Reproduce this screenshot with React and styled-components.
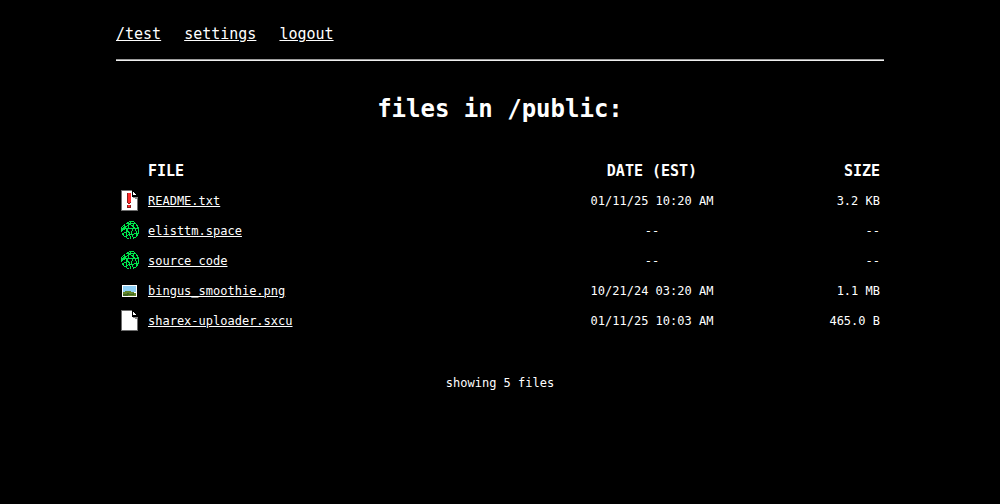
import React from "react";
import styled, { createGlobalStyle } from "styled-components";

const GlobalStyle = createGlobalStyle`
  body {
    margin: 0;
    background: #000;
    color: #fff;
    font-family: "DejaVu Sans Mono", monospace;
    font-size: 12px;
    line-height: 16px;
  }
`;

const Page = styled.div`
  max-width: 768px;
  margin: 0 auto;
  padding: 24px 16px;
`;

const Nav = styled.nav`
  display: flex;
  gap: 23px;
  font-size: 15px;
  line-height: 20px;
`;

const Link = styled.a`
  color: #fff;
  text-decoration: underline;
`;

const Rule = styled.hr`
  height: 1px;
  margin: 15px 0 0;
  border: 0;
  border-top: 1px solid #9a9a9a;
  background: #eee;
`;

const Title = styled.h1`
  margin: 32px 0 31px;
  font-size: 24px;
  line-height: 32px;
  text-align: center;
`;

const Table = styled.table`
  width: 100%;
  table-layout: fixed;
  border-collapse: collapse;
`;

const IconCol = styled.col`
  width: 28px;
`;

const DateCol = styled.col`
  width: 200px;
`;

const SizeCol = styled.col`
  width: 132px;
`;

const Cell = styled.td`
  height: 30px;
  padding: 0 4px;
  text-align: ${(p) => p.$align || "left"};
  vertical-align: middle;
`;

const HeadCell = styled(Cell).attrs({ as: "th" })`
  font-size: 15px;
  font-weight: bold;
`;

const Icon = styled.svg`
  display: block;
  width: 20px;
  height: 22px;
`;

const Footer = styled.footer`
  margin-top: 39px;
  text-align: center;
`;

function Sheet({ alert }) {
  return (
    <Icon viewBox="0 0 20 22" shapeRendering="crispEdges" aria-hidden="true">
      <path fill="#6e6e6e" d="M1 0H12V6H18V21H1Z" />
      <path fill="#fff" d="M2 1H12V7H17V20H2Z" />
      <path fill="#000" d="M12 0H18V7H12Z" />
      <path fill="#fff" d="M13 2H14V3H15V4H16V5H13Z" />
      <path fill="#8c8c8c" d="M13 7H18V8H13ZM15 8H17V9H15Z" />
      {alert && (
        <>
          <path fill="#8a1c1c" d="M7 3H11V13H10V14H8V13H7ZM7 15H11V18H7Z" />
          <path fill="#ff2a2a" d="M8 3H11V12H10V13H8ZM8 15H10V17H8Z" />
        </>
      )}
    </Icon>
  );
}

function Globe() {
  return (
    <Icon viewBox="0 0 20 22" shapeRendering="crispEdges" aria-hidden="true">
      <g fill="none" stroke="#00e64d" strokeWidth="1" transform="translate(1 1)">
        <path d="M5.5 2.5L8.5 0.5H12.5L15.5 3.5L17.5 7.5V12.5L15.5 15.5L12.5 17.5M8.5 18.5L5.5 16.5L2.5 14.5L1.5 12.5M0.5 10.5V6.5L3.5 3.5" />
        <path d="M1.5 7.5L5.5 5.5L9.5 2.5L14.5 2.5M5.5 2.5L9.5 3.5L13.5 6.5L15.5 11.5V15.5" />
        <path d="M0.5 9.5L4.5 7.5L10.5 7.5L17.5 7.5M3.5 3.5L4.5 7.5L8.5 11.5L9.5 18.5" />
        <path d="M9.5 0.5L7.5 5.5L5.5 10.5L5.5 16.5M13.5 1.5L12.5 5.5L10.5 11.5L12.5 17.5" />
        <path d="M1.5 12.5L6.5 10.5L9.5 13.5L17.5 12.5M3.5 15.5L8.5 13.5" />
      </g>
    </Icon>
  );
}

function Picture() {
  return (
    <Icon viewBox="0 0 20 22" shapeRendering="crispEdges" aria-hidden="true">
      <path fill="#fff" d="M2 5H17V17H2Z" />
      <path fill="#8fd0f7" d="M3 6H16V12H3Z" />
      <path fill="#64862c" d="M3 12H5V11H11V12H14V13H16V16H3Z" />
      <path fill="#3f6420" d="M3 14H7V13H9V14H13V13H14V15H8V16H3Z" />
    </Icon>
  );
}

const icons = {
  alert: <Sheet alert />,
  web: <Globe />,
  image: <Picture />,
  file: <Sheet />,
};

const files = [
  { icon: "alert", name: "README.txt", date: "01/11/25 10:20 AM", size: "3.2 KB" },
  { icon: "web", name: "elisttm.space", date: "--", size: "--" },
  { icon: "web", name: "source code", date: "--", size: "--" },
  { icon: "image", name: "bingus_smoothie.png", date: "10/21/24 03:20 AM", size: "1.1 MB" },
  { icon: "file", name: "sharex-uploader.sxcu", date: "01/11/25 10:03 AM", size: "465.0 B" },
];

export default function App() {
  return (
    <>
      <GlobalStyle />
      <Page>
        <Nav>
          <Link href="#test">/test</Link>
          <Link href="#settings">settings</Link>
          <Link href="#logout">logout</Link>
        </Nav>
        <Rule />
        <main>
          <Title>files in /public:</Title>
          <Table>
            <colgroup>
              <IconCol />
              <col />
              <DateCol />
              <SizeCol />
            </colgroup>
            <thead>
              <tr>
                <Cell />
                <HeadCell scope="col">FILE</HeadCell>
                <HeadCell scope="col" $align="center">DATE (EST)</HeadCell>
                <HeadCell scope="col" $align="right">SIZE</HeadCell>
              </tr>
            </thead>
            <tbody>
              {files.map((file) => (
                <tr key={file.name}>
                  <Cell>{icons[file.icon]}</Cell>
                  <Cell>
                    <Link href={`#${encodeURIComponent(file.name)}`}>{file.name}</Link>
                  </Cell>
                  <Cell $align="center">{file.date}</Cell>
                  <Cell $align="right">{file.size}</Cell>
                </tr>
              ))}
            </tbody>
          </Table>
        </main>
        <Footer>showing {files.length} files</Footer>
      </Page>
    </>
  );
}
